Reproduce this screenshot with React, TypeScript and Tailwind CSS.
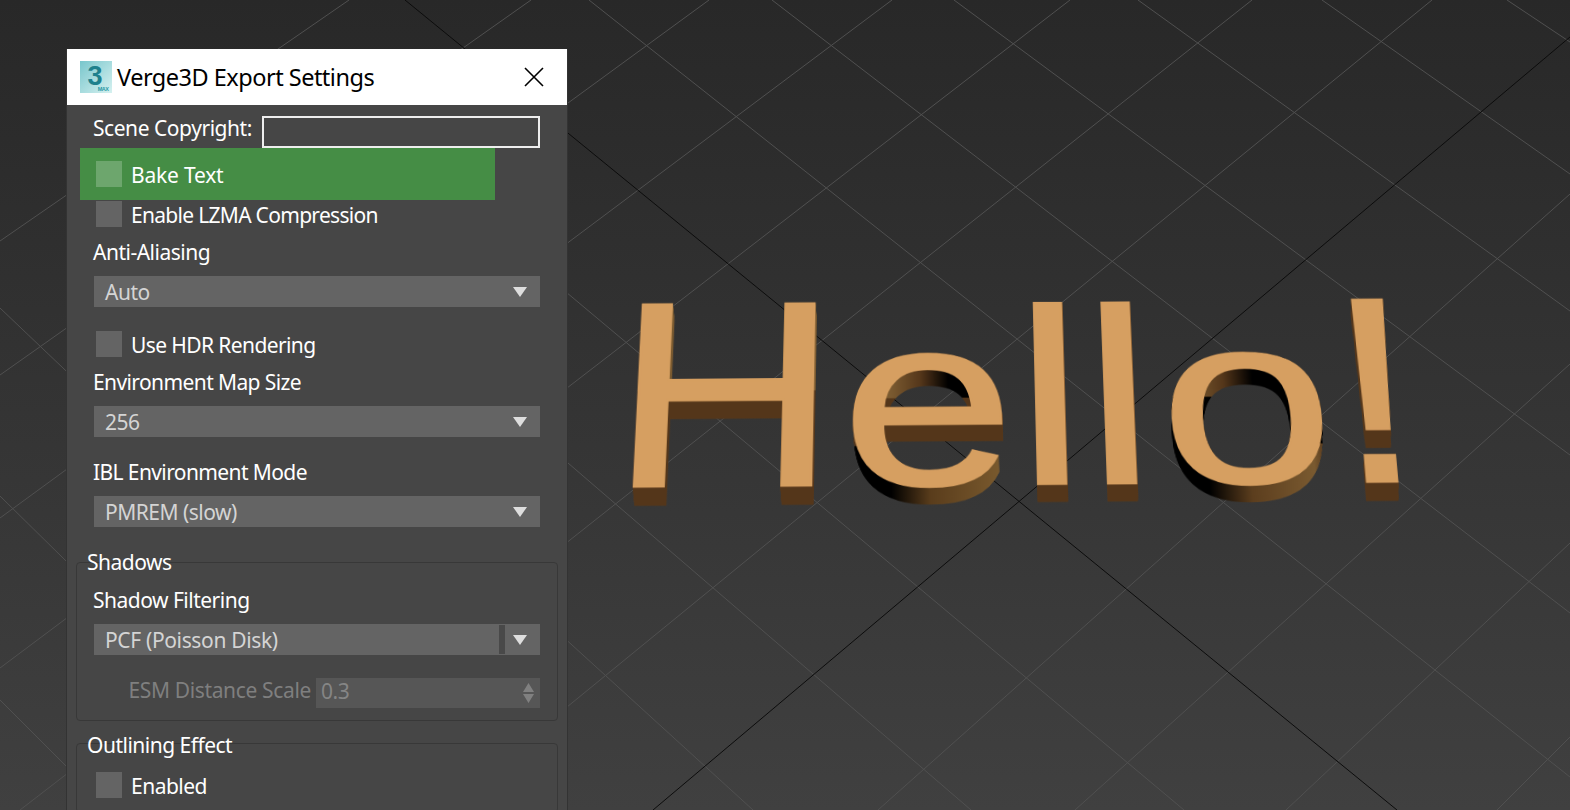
const GRID_LINES = [
  // up-right family
  [0, 241, 349, 0],
  [0, 375, 531, 0],
  [0, 518, 709, 0],
  [0, 668, 892, 0],
  [20, 810, 1070, 0],
  [229, 810, 1252, 0],
  [441, 810, 1432, 0],
  [878, 810, 1570, 194],
  [1075, 810, 1570, 364],
  [1286, 810, 1570, 543],
  [1497, 810, 1570, 737],
  // down-right family
  [0, 308, 527, 810],
  [0, 496, 319, 810],
  [0, 700, 110, 810],
  [300, 397, 753, 810],
  [460, 370, 971, 810],
  [560, 287, 1184, 810],
  [589, 0, 1570, 777],
  [772, 0, 1570, 613],
  [954, 0, 1570, 455],
  [1138, 0, 1570, 311],
  [1322, 0, 1570, 174],
  [1507, 0, 1570, 42],
];

const AXIS_LINES = [
  [405, 0, 1397, 810],
  [653, 810, 1570, 37],
];

const WORD_X = '608 840 1017 1087 1163 1339';
const BASELINE = 484;
const DARK = '#54361a';
const SIDE = '#7a5a30';
const FACE = '#d69f61';

// the 3D text has other proportions than Liberation Sans, so each letter gets its own height
const LETTERS = [
  { id: 'h', x: 600, width: 232, stretch: 1.024 },
  { id: 'e', x: 832, width: 180, stretch: 0.933 },
  { id: 'l', x: 1012, width: 138, stretch: 0.966 },
  { id: 'o', x: 1150, width: 184, stretch: 0.926 },
  { id: 'mark', x: 1334, width: 90, stretch: 1.025 },
];

// colour of the extruded sides along the word, x -> colour
const UPPER_STOPS: [number, string][] = [
  [600, SIDE], [890, SIDE], [920, DARK], [948, '#000'], [975, '#000'], [1003, '#6a4a26'],
  [1020, DARK], [1160, DARK], [1197, SIDE], [1230, DARK], [1260, '#000'], [1362, '#000'], [1366, DARK], [1400, DARK],
];
const MIDDLE_STOPS: [number, string][] = [
  [600, DARK], [1155, DARK], [1165, '#000'], [1362, '#000'], [1366, DARK], [1400, DARK],
];
const LOWER_STOPS: [number, string][] = [
  [600, DARK], [845, DARK], [853, '#000'], [890, '#000'], [930, '#5a3d1c'], [1001, '#7a5a2e'], [1015, DARK],
  [1150, DARK], [1165, '#000'], [1210, '#000'], [1253, '#5c3e1e'], [1317, SIDE], [1330, DARK], [1400, DARK],
];

function Gradient({ id, stops }: { id: string; stops: [number, string][] }) {
  return (
    <linearGradient id={id} gradientUnits="userSpaceOnUse" x1="600" y1="0" x2="1400" y2="0">
      {stops.map(([x, color]) => (
        <stop key={x} offset={(x - 600) / 800} stopColor={color} />
      ))}
    </linearGradient>
  );
}

function Extrude({ fill, clip }: { fill: string; clip: string }) {
  const layers = Array.from({ length: 22 }, (_, n) => n);
  return (
    <g fill={fill} stroke={fill} strokeWidth="2.5" clipPath={clip}>
      {layers.map((n) => (
        <use
          key={n}
          href="#hello-word"
          transform={`translate(1100 ${n}) scale(${1 - n * 0.00026} 1) translate(-1100 0)`}
        />
      ))}
    </g>
  );
}

function Scene() {
  return (
    <>
      <svg className="absolute inset-0 h-[810px] w-[1570px]" viewBox="0 0 1570 810" fill="none">
        {GRID_LINES.map(([x1, y1, x2, y2]) => (
          <line key={`${x1}-${y1}`} x1={x1} y1={y1} x2={x2} y2={y2} stroke="#505050" />
        ))}
        {AXIS_LINES.map(([x1, y1, x2, y2]) => (
          <line key={`${x1}-${y1}`} x1={x1} y1={y1} x2={x2} y2={y2} stroke="#0c0c0c" />
        ))}
      </svg>
      <svg
        className="absolute inset-0 h-[810px] w-[1570px] origin-[960px_487px] [transform:perspective(3480px)_rotateX(32.4deg)_rotateZ(-0.45deg)]"
        viewBox="0 0 1570 810"
      >
        <defs>
          <Gradient id="side-upper" stops={UPPER_STOPS} />
          <Gradient id="side-middle" stops={MIDDLE_STOPS} />
          <Gradient id="side-lower" stops={LOWER_STOPS} />
          <clipPath id="band-upper">
            <rect x="0" y="0" width="1570" height="372" />
          </clipPath>
          <clipPath id="band-middle">
            <rect x="0" y="372" width="1570" height="62" />
          </clipPath>
          <clipPath id="band-lower">
            <rect x="0" y="434" width="1570" height="200" />
          </clipPath>
          <clipPath id="word-source">
            <rect x="0" y="0" width="1" height="1" />
          </clipPath>
          {LETTERS.map((letter) => (
            <clipPath key={letter.id} id={`letter-${letter.id}`}>
              <rect x={letter.x} y="0" width={letter.width} height="810" />
            </clipPath>
          ))}
        </defs>

        {/* the word itself, every letter below is drawn from it */}
        <g clipPath="url(#word-source)">
          <text
            id="hello-word"
            x={WORD_X}
            y={BASELINE}
            fontSize="317"
            className="font-['Liberation_Sans',Arial,sans-serif]"
          >
            Hello!
          </text>
        </g>

        {LETTERS.map((letter) => (
          <g key={letter.id} clipPath={`url(#letter-${letter.id})`}>
            <g transform={`translate(0 ${BASELINE}) scale(1 ${letter.stretch}) translate(0 ${-BASELINE})`}>
              <Extrude fill="url(#side-upper)" clip="url(#band-upper)" />
              <Extrude fill="url(#side-middle)" clip="url(#band-middle)" />
              <Extrude fill="url(#side-lower)" clip="url(#band-lower)" />
              <use href="#hello-word" fill={FACE} stroke={FACE} strokeWidth="2.5" />
            </g>
          </g>
        ))}
      </svg>
    </>
  );
}

function MaxIcon() {
  return (
    <svg className="h-8 w-8 shrink-0" viewBox="0 0 32 32">
      <defs>
        <linearGradient id="max-bg" x1="0" y1="0" x2="1" y2="1">
          <stop offset="0" stopColor="#78c6cc" />
          <stop offset="1" stopColor="#d6f1f0" />
        </linearGradient>
      </defs>
      <rect width="32" height="32" fill="url(#max-bg)" />
      <text x="7.500" y="23.500" fontSize="27" fontWeight="700" fill="#1e808c" className="font-['Liberation_Sans',sans-serif]">
        3
      </text>
      <text x="17.700" y="30" fontSize="5.500" fontWeight="700" fill="#2a9aa6" className="font-['Liberation_Sans',sans-serif]">
        MAX
      </text>
    </svg>
  );
}

function Checkbox({ label, tone = 'bg-[#646464]', className = '' }: { label: string; tone?: string; className?: string }) {
  return (
    <div className="flex items-center gap-[9px]">
      <div className={`h-[26px] w-[26px] ${tone}`} />
      <span className={`relative top-[2px] ${className}`}>{label}</span>
    </div>
  );
}

function Select({ value }: { value: string }) {
  return (
    <div className="mx-[27px] flex h-[31px] items-center justify-between bg-[#646464] pl-[11px] pr-[13px] text-[#d4d4d4]">
      <span className="relative top-px">{value}</span>
      <Arrow />
    </div>
  );
}

function Arrow() {
  return (
    <svg className="h-[10px] w-[14px]" viewBox="0 0 14 10">
      <path d="M0 0h14L7 10z" fill="#dedede" />
    </svg>
  );
}

function Group({
  title,
  titleClass,
  className,
  children,
}: {
  title: string;
  titleClass: string;
  className: string;
  children?: React.ReactNode;
}) {
  return (
    <div className={`relative mx-[9px] rounded border border-[#383838] ${className}`}>
      <span className={`absolute left-[10px] leading-[32px] ${titleClass}`}>{title}</span>
      {children}
    </div>
  );
}

export default function App() {
  return (
    <div className="relative h-[810px] w-[1570px] overflow-hidden bg-gradient-to-b from-[#282828] to-[#404040] font-['Noto_Sans',sans-serif] text-[21px] tracking-[-0.5px] text-white">
      <Scene />

      <div className="absolute left-[66px] top-[49px] w-[502px] border-x border-[#333333] bg-[#464646]">
        <div className="flex h-14 items-center bg-white pl-[13px] pr-[23px] text-black">
          <MaxIcon />
          <span className="relative top-px ml-[5px] text-[23.500px] tracking-[-0.5px]">Verge3D Export Settings</span>
          <svg className="ml-auto h-5 w-5" viewBox="0 0 20 20" fill="none" stroke="#000" strokeWidth="1.6">
            <path d="M1 1l18 18M19 1L1 19" />
          </svg>
        </div>

        <div className="flex h-[43px] items-start pl-[26px]">
          <span className="mt-2 w-[169px] whitespace-nowrap tracking-[-0.45px]">Scene Copyright:</span>
          <div className="mr-[27px] mt-[11px] h-8 flex-1 border-2 border-[#eeeeee]" />
        </div>

        <div className="ml-[13px] flex h-[52px] w-[415px] items-center bg-[#458d45] pl-4">
          <Checkbox label="Bake Text" tone="bg-[#6da66d]" className="tracking-[-0.2px]" />
        </div>
        <div className="flex h-7 items-center pl-[29px]">
          <Checkbox label="Enable LZMA Compression" className="tracking-[-0.7px]" />
        </div>

        <div className="flex h-12 items-center pl-[26px] pt-[2px]">Anti-Aliasing</div>
        <Select value="Auto" />

        <div className="mt-6 flex h-[26px] items-center pl-[29px]">
          <Checkbox label="Use HDR Rendering" className="tracking-[-0.6px]" />
        </div>

        <div className="flex h-[49px] items-center pl-[26px] pt-[2px] tracking-[-0.6px]">Environment Map Size</div>
        <Select value="256" />

        <div className="flex h-[59px] items-center pl-[26px] pt-3 tracking-[-0.6px]">IBL Environment Mode</div>
        <Select value="PMREM (slow)" />

        <Group title="Shadows" titleClass="-top-[17px]" className="mt-[35px] h-[159px]">
          <div className="flex h-[61px] items-center pl-4 pt-[14px]">Shadow Filtering</div>
          <div className="mx-[17px] flex h-[31px] items-center bg-[#646464] pl-[11px] pr-[13px] text-[#d4d4d4]">
            <span className="relative top-px tracking-[-0.35px]">PCF (Poisson Disk)</span>
            <div className="ml-auto mr-[4px] h-[29px] w-[6px] bg-[#494949]" />
            <div className="ml-[4px]">
              <Arrow />
            </div>
          </div>
          <div className="mx-[17px] mt-[23px] flex h-[30px] items-center justify-end text-[#7f7f7f]">
            <span className="relative -top-[2px] tracking-[-0.35px]">ESM Distance Scale</span>
            <div className="ml-[5px] flex h-[30px] w-[224px] items-center justify-between bg-[#565656] pl-[5px] pr-[6px] text-[#858585]">
              <span className="relative -top-px">0.3</span>
              <svg className="h-[20px] w-[11px]" viewBox="0 0 11 20" fill="#808080">
                <path d="M5.5 0L11 9H0zM0 11h11l-5.500 9z" />
              </svg>
            </div>
          </div>
        </Group>

        <Group title="Outlining Effect" titleClass="-top-[15px]" className="mt-[22px] h-[70px] pl-[19px] pt-[25px]">
          <Checkbox label="Enabled" />
        </Group>
      </div>
    </div>
  );
}
